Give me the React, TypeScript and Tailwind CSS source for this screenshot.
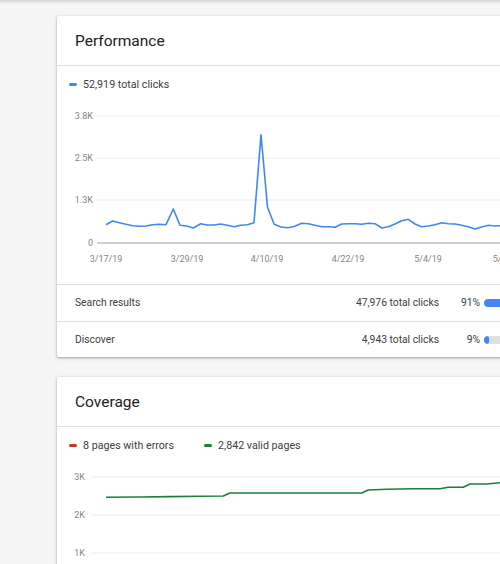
import React from "react";

const CARD_X = 57;

// page-space points read off the reference, shifted into chart space below
const clicks: [number, number][] = [
  [106, 224.7], [112.7, 221], [119.3, 222.7], [126, 224.3], [132.7, 225.7], [139.3, 226.3],
  [146, 226], [152.7, 224.7], [159.3, 224.3], [166, 224.7], [173.3, 209], [180, 225.3],
  [186.7, 226], [193.3, 228], [200.7, 223.7], [207.3, 225], [214, 225], [220.7, 224],
  [227.3, 225.3], [234, 226.7], [240.7, 225.3], [247.3, 224.7], [254, 222.7], [261, 134.7],
  [267.5, 207.3], [274.2, 224.3], [281, 227], [287.5, 227.7], [294.2, 226.5], [301.7, 223.3],
  [308.3, 223.7], [315, 225.3], [321.7, 226.7], [328.3, 226.7], [335, 227.3], [341.7, 224],
  [348.3, 223.7], [355, 223.7], [361.7, 224.3], [368.3, 223.3], [375, 223.7], [381.7, 228],
  [388.3, 226.7], [395, 224], [401.7, 220.7], [408.3, 219.3], [415, 224], [421.7, 226.7],
  [428.3, 226], [435, 224.7], [441.7, 222.7], [448.3, 223.7], [455, 224], [461.7, 225.3],
  [468.3, 226.7], [475, 229], [481.7, 227], [488.3, 225.3], [495, 226], [501.7, 225.7],
  [508.3, 225], [515, 224.5],
];

const valid: [number, number][] = [
  [106, 496.3], [140, 496], [170, 495.6], [200, 495.3], [223.3, 495], [230, 492],
  [361.7, 492], [368.3, 489], [386.7, 488.3], [413.3, 487.7], [440, 487.7], [448.3, 486.3],
  [463.3, 486.3], [470, 483], [486.7, 483], [500, 481.7], [520, 481],
];

const toPath = (pts: [number, number][], top: number) =>
  pts.map(([x, y]) => `${(x - CARD_X).toFixed(1)},${(y - top).toFixed(1)}`).join(" ");

function Card({ title, children }: { title: string; children: React.ReactNode }) {
  return (
    <div className="w-[640px] bg-white rounded-[2px] shadow-[0_1px_2px_rgba(60,64,67,0.3),0_1px_3px_1px_rgba(60,64,67,0.15)]">
      <div className="h-[50px] flex items-center pl-[18px] pt-[2px] border-b border-[#e0e0e0]">
        <span className="text-[15.5px] text-[#202124]">{title}</span>
      </div>
      {children}
    </div>
  );
}

function Legend({ items }: { items: { color: string; label: string }[] }) {
  return (
    <div className="flex items-center gap-[30px] pl-[12px] pt-[4px] h-[34px] text-[10.7px] text-[#3c4043]">
      {items.map((it) => (
        <div key={it.label} className="flex items-center gap-[6px]">
          <span className={`w-[8px] h-[3px] rounded-full ${it.color}`} />
          <span>{it.label}</span>
        </div>
      ))}
    </div>
  );
}

function SourceRow({ label, total, pct, fill, h }: { label: string; total: string; pct: string; fill: string; h: string }) {
  return (
    <div className={`${h} flex items-center border-t border-[#e0e0e0] pl-[18px] text-[10.3px] text-[#3c4043]`}>
      <span className="w-[265px]">{label}</span>
      <span className="w-[99px] text-right">{total}</span>
      <span className="w-[41px] text-right">{pct}</span>
      <div className="ml-[4px] w-[50px] h-[8px] rounded-full bg-[#e0e0e0] overflow-hidden">
        <div className={`h-full rounded-full bg-[#4285f4] ${fill}`} />
      </div>
    </div>
  );
}

function PerformanceChart() {
  const top = 100;
  const grid = [
    { y: 16, label: "3.8K" },
    { y: 58, label: "2.5K" },
    { y: 100, label: "1.3K" },
  ];
  const dates = [
    { x: 106, t: "3/17/19" },
    { x: 187, t: "3/29/19" },
    { x: 267, t: "4/10/19" },
    { x: 348, t: "4/22/19" },
    { x: 428, t: "5/4/19" },
    { x: 509, t: "5/16/19" },
  ];
  return (
    <svg width="640" height="184" className="block" style={{ fontFamily: "Roboto, sans-serif" }}>
      {grid.map((g) => (
        <g key={g.label}>
          <line x1="40" x2="640" y1={g.y} y2={g.y} stroke="#ececec" strokeWidth="1" />
          <text x="36" y={g.y + 3} textAnchor="end" fontSize="9" fill="#80868b">{g.label}</text>
        </g>
      ))}
      <line x1="40" x2="640" y1="143" y2="143" stroke="#9aa0a6" strokeWidth="1" />
      <text x="36" y="146" textAnchor="end" fontSize="9" fill="#80868b">0</text>
      {dates.map((d) => (
        <text key={d.t} x={d.x - CARD_X} y="162" textAnchor="middle" fontSize="9" fill="#80868b">{d.t}</text>
      ))}
      <polyline points={toPath(clicks, top)} fill="none" stroke="#4285f4" strokeWidth="1.6" strokeLinejoin="round" />
    </svg>
  );
}

function CoverageChart() {
  const top = 460;
  const grid = [
    { y: 16, label: "3K" },
    { y: 54, label: "2K" },
    { y: 92, label: "1K" },
  ];
  return (
    <svg width="640" height="130" className="block" style={{ fontFamily: "Roboto, sans-serif" }}>
      {grid.map((g) => (
        <g key={g.label}>
          <line x1="34" x2="640" y1={g.y} y2={g.y} stroke="#ececec" strokeWidth="1" />
          <text x="28" y={g.y + 3} textAnchor="end" fontSize="9" fill="#80868b">{g.label}</text>
        </g>
      ))}
      <polyline points={toPath(valid, top)} fill="none" stroke="#188038" strokeWidth="1.6" strokeLinejoin="round" />
    </svg>
  );
}

export default function App() {
  return (
    <div className="w-[500px] h-[564px] overflow-hidden bg-[#f5f5f5]" style={{ fontFamily: "Roboto, 'Liberation Sans', sans-serif" }}>
      <div className="h-[4px] bg-gradient-to-b from-[#d4d4d4] to-[#f5f5f5]" />
      <div className="flex flex-col gap-[20px] pt-[12px] pl-[57px]">
        <Card title="Performance">
          <Legend items={[{ color: "bg-[#4285f4]", label: "52,919 total clicks" }]} />
          <PerformanceChart />
          <SourceRow label="Search results" total="47,976 total clicks" pct="91%" fill="w-[91%]" h="h-[37px]" />
          <SourceRow label="Discover" total="4,943 total clicks" pct="9%" fill="w-[9%]" h="h-[36px]" />
        </Card>
        <Card title="Coverage">
          <Legend
            items={[
              { color: "bg-[#d93025]", label: "8 pages with errors" },
              { color: "bg-[#188038]", label: "2,842 valid pages" },
            ]}
          />
          <CoverageChart />
        </Card>
      </div>
    </div>
  );
}
